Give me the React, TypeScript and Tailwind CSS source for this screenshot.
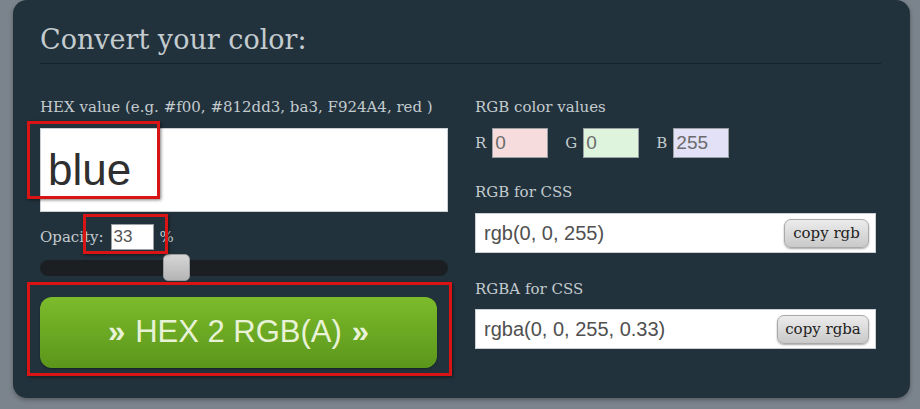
import React from 'react';

const serif = { fontFamily: '"DejaVu Serif", "Liberation Serif", serif' };
const sans = { fontFamily: '"Liberation Sans", Arial, sans-serif' };

const CopyButton: React.FC<{ label: string; width: string }> = ({ label, width }) => (
  <div
    className={`${width} h-[29px] rounded-[7px] border border-[#a9a9a9] bg-gradient-to-b from-[#ececec] to-[#c9c9c9] shadow-[0_1px_2px_rgba(0,0,0,0.35)] flex items-center justify-center text-[15px] text-[#222]`}
    style={serif}
  >
    {label}
  </div>
);

const ColorBox: React.FC<{ label: string; value: string; bg: string }> = ({ label, value, bg }) => (
  <div className="flex items-center gap-[6px]">
    <span className="text-[15px] text-[#c3cbcf]" style={serif}>{label}</span>
    <div className={`w-[56px] h-[30px] ${bg} border border-[#9aa0a3] flex items-center pl-[2px] text-[19px] text-[#6b6b6b]`} style={sans}>
      {value}
    </div>
  </div>
);

export default function App() {
  return (
    <div className="w-[920px] h-[409px] bg-[#7b838c] overflow-hidden">
      <div className="ml-[13px] w-[897px] h-[398px] bg-[#22323c] rounded-[14px] shadow-[0_2px_4px_rgba(0,0,0,0.3)] px-[27px] pt-[23px]">
        <h1 className="text-[27px] leading-[34px] text-[#c4ccd0]" style={serif}>
          Convert your color:
        </h1>
        <div className="mt-[6px] w-[841px] border-b border-[#16222a]" />

        <div className="flex gap-[27px] mt-[34px]">
          {/* left column */}
          <div className="w-[408px] relative">
            <div className="text-[15px] leading-[18px] text-[#c3cbcf]" style={serif}>
              HEX value (e.g. #f00, #812dd3, ba3, F924A4, red )
            </div>
            <div className="mt-[12px] h-[84px] bg-white border border-[#c9cfd2] flex items-center pl-[7px] text-[44px] text-[#2f2f2f]" style={sans}>
              blue
            </div>
            <div className="mt-[12px] flex items-center h-[26px]">
              <span className="text-[15px] text-[#c3cbcf]" style={serif}>Opacity:</span>
              <div className="ml-[7px] w-[43px] h-[26px] bg-white border border-[#9aa0a3] flex items-center pl-[2px] text-[17px] text-[#555]" style={sans}>
                33
              </div>
              <span className="ml-[6px] text-[15px] text-[#c3cbcf]" style={serif}>%</span>
            </div>
            <div className="mt-[10px] h-[16px] rounded-full bg-[#1b1f21] relative">
              <div className="absolute left-[123px] top-[-6px] w-[27px] h-[27px] rounded-[5px] bg-gradient-to-b from-[#d6d6d6] to-[#b5b5b5] border border-[#9c9c9c]" />
            </div>
            <div className="mt-[21px] w-[397px] h-[71px] rounded-[12px] bg-gradient-to-b from-[#7cbb2b] to-[#5b961b] shadow-[0_1px_2px_rgba(0,0,0,0.4)] flex items-center justify-center text-[31px] text-[#e8f2d6]" style={sans}>
              <span className="font-bold mr-[10px]">»</span>HEX 2 RGB(A)<span className="font-bold ml-[10px]">»</span>
            </div>

            {/* annotation boxes */}
            <div className="absolute left-[-13px] top-[23px] w-[133px] h-[78px] border-[3px] border-[#d81414] shadow-[1px_1px_3px_rgba(0,0,0,0.5)]" />
            <div className="absolute left-[43px] top-[116px] w-[85px] h-[40px] border-[3px] border-[#d81414] shadow-[1px_1px_3px_rgba(0,0,0,0.5)]" />
            <div className="absolute left-[-13px] top-[184px] w-[425px] h-[94px] border-[3px] border-[#d81414] shadow-[1px_1px_3px_rgba(0,0,0,0.5)]" />
          </div>

          {/* right column */}
          <div className="w-[401px]">
            <div className="text-[15px] leading-[18px] text-[#c3cbcf]" style={serif}>RGB color values</div>
            <div className="mt-[12px] flex items-center gap-[17px]">
              <ColorBox label="R" value="0" bg="bg-[#f6dcdc]" />
              <ColorBox label="G" value="0" bg="bg-[#dff4dc]" />
              <ColorBox label="B" value="255" bg="bg-[#e2e1f7]" />
            </div>
            <div className="mt-[25px] text-[15px] leading-[18px] text-[#c3cbcf]" style={serif}>RGB for CSS</div>
            <div className="mt-[12px] h-[40px] bg-white border border-[#c9cfd2] flex items-center justify-between pl-[8px] pr-[6px]">
              <span className="text-[20px] text-[#505050]" style={sans}>rgb(0, 0, 255)</span>
              <CopyButton label="copy rgb" width="w-[85px]" />
            </div>
            <div className="mt-[27px] text-[15px] leading-[18px] text-[#c3cbcf]" style={serif}>RGBA for CSS</div>
            <div className="mt-[11px] h-[40px] bg-white border border-[#c9cfd2] flex items-center justify-between pl-[8px] pr-[6px]">
              <span className="text-[20px] text-[#505050]" style={sans}>rgba(0, 0, 255, 0.33)</span>
              <CopyButton label="copy rgba" width="w-[92px]" />
            </div>
          </div>
        </div>
      </div>
    </div>
  );
}
